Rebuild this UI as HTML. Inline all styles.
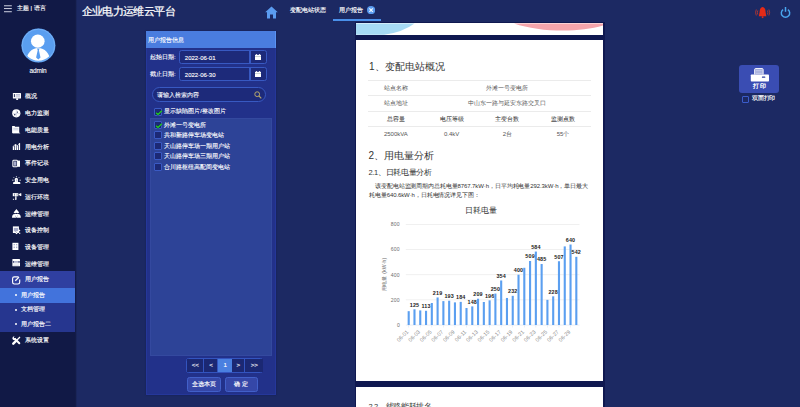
<!DOCTYPE html>
<html><head><meta charset="utf-8">
<style>
*{margin:0;padding:0;box-sizing:border-box}
html,body{width:800px;height:407px;overflow:hidden;background:#1c2963;font-family:"Liberation Sans",sans-serif;color:#fff}
.a{position:absolute;white-space:nowrap}
#side{position:absolute;left:0;top:0;width:75px;height:407px;background:#111946}
.mi{position:absolute;left:0;width:75px;height:17px;font-size:6px;line-height:17px}
.mi span{position:absolute;left:25px;top:0;-webkit-text-stroke:.15px #fff}
.mi svg{position:absolute;left:12px;top:4px;width:9px;height:9px}
.sub{position:absolute;left:0;width:75px;height:15px;font-size:6px;line-height:15px}
.sub span{position:absolute;left:20.5px;top:0;-webkit-text-stroke:.15px #fff}
.sub i{position:absolute;left:14.9px;top:6.3px;width:2.2px;height:2.2px;background:#fff;border-radius:50%}
#panelbg{position:absolute;left:145.8px;top:30.9px;width:130.2px;height:364.2px;background:#22318a;border:1px solid #25379a;box-shadow:0 0 1.5px #141d52}
#panel{position:absolute;left:146px;top:31px;width:129px;height:364px}
.inp{position:absolute;background:#1d2a7a;border:1px solid #3859c2;border-radius:2.5px}
.cb{position:absolute;width:8.3px;height:8px;background:#1c2975;border:1px solid #3a5ac4;border-radius:1px}
.lt{position:absolute;font-size:6px;line-height:8px;white-space:nowrap;-webkit-text-stroke:.12px #fff}
.doc{position:absolute;left:355px;width:248.7px;background:#fff;border:1px solid #0f1850;color:#333}
.tr{position:absolute;left:12px;width:223px;border-top:1px solid #ebebeb;height:15.5px;font-size:6px;line-height:15px;color:#555}
.tr div{position:absolute;top:0;text-align:center;width:55.75px}
.pg{position:absolute;top:0;height:100%;background:#1b2873;border:1px solid #3354bf;font-size:6.2px;line-height:12.5px;text-align:center;-webkit-text-stroke:.1px #fff}
.btn{position:absolute;height:14.5px;background:#3547a8;border:1px solid #4260c9;border-radius:2.5px;font-size:6px;line-height:12.5px;text-align:center;-webkit-text-stroke:.15px #fff}
</style></head><body>
<div id="side">
  <svg class="a" style="left:3.8px;top:4.5px" width="8" height="8" viewBox="0 0 8 8"><rect x="0" y=".35" width="7.8" height=".9" fill="#e4e6f2"/><rect x="0" y="3.15" width="7.8" height=".9" fill="#e4e6f2"/><rect x="0" y="6.3" width="7.8" height=".9" fill="#e4e6f2"/></svg>
  <div class="a" style="left:16.8px;top:5px;font-size:6px;line-height:7px;-webkit-text-stroke:.15px #fff">主题 | 语言</div>
  <svg class="a" style="left:20.5px;top:28px" width="35" height="35" viewBox="0 0 35 35">
    <circle cx="17.4" cy="17.45" r="17" fill="#5a9ef0"/>
    <circle cx="17.4" cy="17.45" r="16.3" fill="none" stroke="#7ab4f6" stroke-width=".8"/>
    <clipPath id="cc"><circle cx="17.4" cy="17.45" r="15.2"/></clipPath>
    <g clip-path="url(#cc)">
    <ellipse cx="16.8" cy="13.2" rx="6.8" ry="6.6" fill="#fff"/>
    <ellipse cx="17.2" cy="32.5" rx="11.8" ry="12.5" fill="#fff"/>
    <path d="M16 20.6 L18.6 20.6 L17.9 22.3 L19.5 29.5 L17.3 31.5 L15.1 29.5 L16.7 22.3Z" fill="#5a9ef0"/>
    </g>
  </svg>
  <div class="a" style="left:29.4px;top:67.2px;font-size:6.5px;line-height:7px;letter-spacing:-.12px;-webkit-text-stroke:.1px #fff">admin</div>

  <svg class="a" style="left:10px;top:90px" width="14" height="14" viewBox="0 0 14 14"><rect x="2.9" y="3.1" width="8.1" height="5.3" rx=".5" fill="#fff"/><rect x="3.9" y="4.1" width=".9" height="3" fill="#111946"/><rect x="5.8" y="4.2" width="4.2" height="3.1" fill="#a9adcb"/><rect x="5.8" y="5.1" width="4.2" height=".5" fill="#fff"/><rect x="5.8" y="6.2" width="4.2" height=".5" fill="#fff"/><rect x="6.2" y="8.3" width="1.9" height="1.7" fill="#fff"/></svg>
  <div class="mi" style="top:88.2px"><span>概况</span></div>
  <svg class="a" style="left:10px;top:106px" width="14" height="14" viewBox="0 0 14 14"><circle cx="6.3" cy="7.3" r="4.1" fill="#fff"/><circle cx="7.4" cy="6.1" r=".65" fill="#111946"/><path d="M4 8.3 Q4.8 7.6 5.6 8.4 Q5.2 9.6 4.6 9.4Z" fill="#111946"/><path d="M6.3 3.6 V11 M2.6 7.6 H10" stroke="#a9adcb" stroke-width=".4"/></svg>
  <div class="mi" style="top:105px"><span>电力监测</span></div>
  <svg class="a" style="left:10px;top:123px" width="14" height="14" viewBox="0 0 14 14"><path d="M2.1 3.1 H4.6 L5.1 3.7 H9.2 V10 H2.1Z" fill="#fff"/><rect x="3.3" y="4.9" width="5.2" height=".6" fill="#a9adcb"/><rect x="3.3" y="6.6" width="5.2" height=".6" fill="#a9adcb"/><path d="M9.2 9.5 L9.8 10.3 H2.8 V10" stroke="#fff" stroke-width=".5" fill="none"/></svg>
  <div class="mi" style="top:121.7px"><span>电能质量</span></div>
  <svg class="a" style="left:10px;top:140px" width="14" height="14" viewBox="0 0 14 14"><rect x="2.8" y="6.3" width="1.4" height="3.7" fill="#fff"/><rect x="4.8" y="4.3" width="1.4" height="5.7" fill="#fff"/><rect x="6.7" y="5.5" width="1.5" height="4.5" fill="#fff"/><rect x="8.9" y="3.1" width="1.2" height="6.9" fill="#fff"/><path d="M2.8 6.5 L5.5 4.5 L7.4 5.8 L9.5 3.3" stroke="#fff" stroke-width=".6" fill="none"/><rect x="4.8" y="6.8" width="3.4" height=".4" fill="#a9adcb"/></svg>
  <div class="mi" style="top:138.5px"><span>用电分析</span></div>
  <svg class="a" style="left:10px;top:157px" width="14" height="14" viewBox="0 0 14 14"><rect x="2.9" y="3.2" width="4.5" height="6.6" rx=".8" fill="none" stroke="#fff" stroke-width="1.1"/><rect x="4" y="4.4" width="2.3" height="4.3" fill="#a9adcb"/><rect x="7.6" y="3.6" width="2.4" height="6.2" fill="#fff"/></svg>
  <div class="mi" style="top:155.2px"><span>事件记录</span></div>
  <svg class="a" style="left:10px;top:173px" width="14" height="14" viewBox="0 0 14 14"><path d="M4.8 8.9 V6.3 Q4.8 4.7 6.35 4.7 Q7.9 4.7 7.9 6.3 V8.9Z" fill="#fff"/><rect x="6" y="6.3" width=".7" height="2" fill="#a9adcb"/><path d="M3.1 11 V9.8 Q3.1 8.9 4 8.9 H9.4 Q10.3 8.9 10.3 9.8 V11Z" fill="#fff"/><path d="M6.4 3.1 V4.2 M3.5 4.2 L4.4 5.1 M9.3 4.2 L8.4 5.1 M2 7.2 H3.6 M9.3 7.2 H11" stroke="#fff" stroke-width=".7"/></svg>
  <div class="mi" style="top:172px"><span>安全用电</span></div>
  <svg class="a" style="left:10px;top:190px" width="14" height="14" viewBox="0 0 14 14"><rect x="2.8" y="3.1" width="5.5" height="3.1" fill="#fff"/><rect x="4.1" y="3.7" width=".5" height="2" fill="#111946"/><rect x="6.8" y="3.7" width=".5" height="2" fill="#111946"/><path d="M8.3 4.6 L10.3 3.3 L11.3 3.3 V6 L10.3 6 Z" fill="#fff"/><rect x="5.2" y="6.2" width="1.3" height="2.8" fill="#fff"/><rect x="2.9" y="8.8" width="1.2" height="1" fill="#fff"/><rect x="5" y="8.8" width="1.5" height="1" fill="#fff"/></svg>
  <div class="mi" style="top:188.7px"><span>运行环境</span></div>
  <svg class="a" style="left:10px;top:207px" width="14" height="14" viewBox="0 0 14 14"><path d="M6.4 2 L9.2 5.4 Q8.2 6.3 6.4 6.3 Q4.6 6.3 3.6 5.4Z" fill="#fff"/><circle cx="6.4" cy="6.4" r=".6" fill="#111946"/><path d="M2 10.7 Q2 7.2 4.6 7 L6.2 10.7Z M10.8 10.7 Q10.8 7.2 8.2 7 L6.6 10.7Z" fill="#fff"/><path d="M4.2 6.9 L6.4 10.7 L8.6 6.9Z" fill="#fff"/></svg>
  <div class="mi" style="top:205.5px"><span>运维管理</span></div>
  <svg class="a" style="left:10px;top:223px" width="14" height="14" viewBox="0 0 14 14"><rect x="2.9" y="3.4" width="6" height="6.6" fill="#fff"/><rect x="3.8" y="4.9" width="4.2" height="3.4" fill="#a9adcb"/><path d="M5.8 9.9 L6.5 10.4 L10 6.8" stroke="#fff" stroke-width="1.2" fill="none"/><path d="M5.6 8.6 L6.6 9.6" stroke="#111946" stroke-width=".5"/><circle cx="9.7" cy="10.3" r=".7" fill="#fff"/></svg>
  <div class="mi" style="top:222.2px"><span>设备控制</span></div>
  <svg class="a" style="left:10px;top:240px" width="14" height="14" viewBox="0 0 14 14"><rect x="2.4" y="2.8" width="6" height="7.2" fill="#fff"/><rect x="3.6" y="4" width="1.3" height="1.3" fill="#a9adcb"/><rect x="6" y="4" width="1.3" height="1.3" fill="#a9adcb"/><rect x="3.6" y="6.6" width="1.3" height="1.5" fill="#a9adcb"/><rect x="6" y="6.6" width="1.3" height="1.5" fill="#a9adcb"/></svg>
  <div class="mi" style="top:239px"><span>设备管理</span></div>
  <svg class="a" style="left:10px;top:257px" width="14" height="14" viewBox="0 0 14 14"><rect x="2.4" y="2" width="7.6" height="7.3" rx=".6" fill="#fff"/><rect x="2.4" y="4.1" width="7.6" height="1.6" fill="#a9adcb"/><rect x="2.9" y="4.1" width=".8" height="1.6" fill="#111946"/><rect x="8.6" y="4.1" width=".8" height="1.6" fill="#111946"/><rect x="3.3" y="6.8" width="5.8" height=".4" fill="#a9adcb"/><rect x="3.3" y="8" width="5.8" height=".4" fill="#a9adcb"/></svg>
  <div class="mi" style="top:255.7px"><span>运维管理</span></div>
  <div style="position:absolute;left:0;top:271.2px;width:75.2px;height:16.4px;background:#2f3fa0"></div>
  <svg class="a" style="left:10px;top:273px" width="14" height="14" viewBox="0 0 14 14"><path d="M8.6 3.9 H4.3 Q2.6 3.9 2.6 5.6 V9.3 Q2.6 11 4.3 11 H8 Q9.7 11 9.7 9.3 V6.5" fill="none" stroke="#fff" stroke-width="1.15"/><path d="M5.3 7.8 L9 4.1" stroke="#fff" stroke-width="1.3"/></svg>
  <div class="mi" style="top:271.2px"><span>用户报告</span></div>
  <div style="position:absolute;left:0;top:287.5px;width:75.2px;height:44.4px;background:#26368f"></div>
  <div style="position:absolute;left:0;top:287.5px;width:75.2px;height:15px;background:#4273dc"></div>
  <div class="sub" style="top:287.5px"><i></i><span>用户报告</span></div>
  <div class="sub" style="top:302.3px"><i></i><span>文档管理</span></div>
  <div class="sub" style="top:317px"><i></i><span>用户报告二</span></div>
  <div class="mi" style="top:331.6px"><svg viewBox="0 0 9 9" style="left:11.8px;top:4.6px"><path d="M3 3 L7.3 7.3" stroke="#fff" stroke-width="2" stroke-linecap="round"/><path d="M.3 2.2 Q.5 .2 2.6 .2 L1.8 1.5 L2.5 2.5 L3.8 1.8 Q4.2 4 2.3 4.2 Q.6 4.2 .3 2.2Z" fill="#fff"/><path d="M8 1 L4 5" stroke="#fff" stroke-width="1.3"/><path d="M3.8 5.2 L1.3 7.7" stroke="#fff" stroke-width="2.4" stroke-linecap="round"/></svg><span>系统设置</span></div>
</div>
<div style="position:absolute;left:75px;top:0;width:1.6px;height:407px;background:linear-gradient(90deg,#10173f,#1c2963)"></div>

<!-- header -->
<div class="a" style="left:81.6px;top:4.6px;font-size:11px;line-height:13px;letter-spacing:-.62px;-webkit-text-stroke:.25px #fff">企业电力运维云平台</div>
<svg class="a" style="left:265px;top:6px" width="13" height="13" viewBox="0 0 13 13"><path d="M6.5 .5 L12.8 6.3 L11 6.3 L11 12.5 L8 12.5 L8 8.5 L5 8.5 L5 12.5 L2 12.5 L2 6.3 L.2 6.3Z" fill="#5b9cf0"/></svg>
<div class="a" style="left:289.9px;top:6.9px;font-size:5.9px;line-height:7px;-webkit-text-stroke:.15px #fff">变配电站状态</div>
<div class="a" style="left:339.2px;top:6.9px;font-size:5.9px;line-height:7px;-webkit-text-stroke:.15px #fff">用户报告</div>
<svg class="a" style="left:366.8px;top:6.2px" width="8.2" height="8.2" viewBox="0 0 8 8"><circle cx="4" cy="4" r="4" fill="#5b9cf0"/><path d="M2.3 2.3 L5.7 5.7 M5.7 2.3 L2.3 5.7" stroke="#eef6ff" stroke-width="1.25"/></svg>
<div style="position:absolute;left:333px;top:19.2px;width:48px;height:1.6px;background:#4a90ea"></div>

<!-- top right -->
<svg class="a" style="left:753px;top:6px" width="19" height="13" viewBox="0 0 19 13"><path d="M9.6 1 Q12.5 1.5 12.5 5.5 L13.3 10.3 L5.8 10.3 L6.7 5.5 Q6.7 1.5 9.6 1Z" fill="#e52a17"/><rect x="8.8" y="10.3" width="1.6" height="1.8" fill="#e52a17"/><path d="M3.3 3.5 Q1.8 6.5 3.3 9.5 M15.9 3.5 Q17.4 6.5 15.9 9.5" stroke="#c8372a" stroke-width=".8" fill="none"/><path d="M4.8 4.5 Q3.8 6.5 4.8 8.5 M14.4 4.5 Q15.4 6.5 14.4 8.5" stroke="#c8372a" stroke-width=".8" fill="none"/></svg>
<svg class="a" style="left:780px;top:6px" width="11" height="12" viewBox="0 0 11 12"><path d="M3.1 3.6 A4.2 4.2 0 1 0 7.9 3.6" stroke="#49a6ef" stroke-width="1.45" fill="none"/><path d="M5.5 1 V5.8" stroke="#49a6ef" stroke-width="1.5"/></svg>

<!-- panel -->
<div id="panelbg"></div>
<div id="panel">
  <div style="position:absolute;left:0;top:.2px;width:129.6px;height:16.9px;background:#4a7ddf;border-right:.8px solid #5a92f2"></div>
  <div class="lt" style="left:2px;top:5px;font-size:6px">用户报告信息</div>
  <div class="lt" style="left:4px;top:22px">起始日期:</div>
  <div class="inp" style="left:33px;top:19px;width:88px;height:14.3px;border-radius:2.5px"></div>
  <div style="position:absolute;left:103.1px;top:19px;width:1.8px;height:14.3px;background:#3859c2"></div>
  <div class="lt" style="left:38.8px;top:22.5px">2022-06-01</div>
  <div class="lt" style="left:4px;top:39.3px">截止日期:</div>
  <div class="inp" style="left:33px;top:35.9px;width:88px;height:14.3px"></div>
  <div style="position:absolute;left:103.1px;top:35.9px;width:1.8px;height:14.3px;background:#3859c2"></div>
  <div class="lt" style="left:38.8px;top:39.5px">2022-06-30</div>
  <svg class="a" style="left:109px;top:23px" width="6" height="6" viewBox="0 0 6 6"><rect x="0" y=".8" width="6" height="5.2" fill="#fff"/><rect x="0" y="2" width="6" height=".5" fill="#9aa"/><rect x="1.2" y="0" width=".8" height="1.3" fill="#fff"/><rect x="4" y="0" width=".8" height="1.3" fill="#fff"/></svg>
  <svg class="a" style="left:109px;top:40px" width="6" height="6" viewBox="0 0 6 6"><rect x="0" y=".8" width="6" height="5.2" fill="#fff"/><rect x="0" y="2" width="6" height=".5" fill="#9aa"/><rect x="1.2" y="0" width=".8" height="1.3" fill="#fff"/><rect x="4" y="0" width=".8" height="1.3" fill="#fff"/></svg>
  <div class="inp" style="left:6.4px;top:56px;width:114px;height:15.3px;border-radius:7.6px"></div>
  <div class="lt" style="left:11px;top:60.4px;color:#e6e9f8">请输入检索内容</div>
  <svg class="a" style="left:108px;top:60.3px" width="8" height="8" viewBox="0 0 8 8"><circle cx="3.2" cy="3.2" r="2.4" stroke="#b5a66c" stroke-width="1" fill="none"/><path d="M5 5 L7.3 7.3" stroke="#b5a66c" stroke-width="1.1"/></svg>
  <div class="cb" style="left:8.15px;top:76.8px"></div>
  <svg class="a" style="left:9px;top:78px" width="8" height="7" viewBox="0 0 8 7"><path d="M1.1 3.7 L3 5.6 L6.8 1.8" stroke="#0a1550" stroke-width="2.2" fill="none" opacity=".5"/><path d="M1.1 3.7 L3 5.6 L6.8 1.8" stroke="#22c922" stroke-width="1.4" fill="none"/></svg>
  <div class="lt" style="left:18.2px;top:76.4px">显示缺陷图片/整改图片</div>
  <div style="position:absolute;left:4.1px;top:86.7px;width:121.6px;height:238.4px;background:#2d4397;border:.6px solid #34499f"></div>
  <div class="cb" style="left:8.15px;top:89.9px"></div>
  <svg class="a" style="left:9px;top:91.1px" width="8" height="7" viewBox="0 0 8 7"><path d="M1.1 3.7 L3 5.6 L6.8 1.8" stroke="#0a1550" stroke-width="2.2" fill="none" opacity=".5"/><path d="M1.1 3.7 L3 5.6 L6.8 1.8" stroke="#22c922" stroke-width="1.4" fill="none"/></svg>
  <div class="lt" style="left:18.2px;top:90px">外滩一号变电所</div>
  <div class="cb" style="left:8.15px;top:100.3px"></div>
  <div class="lt" style="left:18.2px;top:100.4px">共和新路停车场变电站</div>
  <div class="cb" style="left:8.15px;top:110.7px"></div>
  <div class="lt" style="left:18.2px;top:110.8px">天山路停车场一期用户站</div>
  <div class="cb" style="left:8.15px;top:121.1px"></div>
  <div class="lt" style="left:18.2px;top:121.2px">天山路停车场三期用户站</div>
  <div class="cb" style="left:8.15px;top:131.5px"></div>
  <div class="lt" style="left:18.2px;top:131.6px">合川路枢纽高配间变电站</div>

  <div style="position:absolute;left:40.3px;top:327.4px;width:77.2px;height:14.8px;border:1px solid #3354bf;border-radius:2.5px;background:#1b2873">
    <div class="pg" style="left:0;width:17px;border-width:0 1px 0 0">&lt;&lt;</div>
    <div class="pg" style="left:17.5px;width:13.5px;border-width:0 1px 0 0">&lt;</div>
    <div class="pg" style="left:31px;width:14px;background:#4a80e0;border-width:0">1</div>
    <div class="pg" style="left:45px;width:13px;border-width:0 1px 0 0">&gt;</div>
    <div class="pg" style="left:58.5px;width:17px;border-width:0">&gt;&gt;</div>
  </div>
  <div class="btn" style="left:40.7px;top:346.3px;width:34px">全选本页</div>
  <div class="btn" style="left:78.5px;top:346.3px;width:33.5px">确 定</div>
</div>

<!-- doc -->
<div style="position:absolute;left:354.6px;top:22.4px;width:250.2px;height:385px;background:#0f1850"></div>
<div class="doc" style="top:22.3px;height:13.7px;overflow:hidden;border-width:1px">
  <svg class="a" style="left:0;top:0" width="247" height="12" viewBox="0 0 247 12"><path d="M0 .4 H58.5 Q47 9 28 11.8 L0 11.8Z" fill="#a6daf4"/><path d="M158 .4 C183 9 222 10 247 2.6 V.4Z" fill="#f5a5ac"/></svg>
</div>
<div class="doc" style="top:38.5px;height:343.3px">
  <div class="a" style="left:13px;top:21px;font-size:10px;line-height:12px;color:#333">1、变配电站概况</div>
  <div class="tr" style="top:40.3px"><div style="left:0">站点名称</div><div style="left:55.75px;width:167.25px">外滩一号变电所</div></div>
  <div class="tr" style="top:55.8px"><div style="left:0">站点地址</div><div style="left:55.75px;width:167.25px">中山东一路与延安东路交叉口</div></div>
  <div class="tr" style="top:71.3px;color:#404040;-webkit-text-stroke:.05px #404040"><div style="left:0">总容量</div><div style="left:55.75px">电压等级</div><div style="left:111.5px">主变台数</div><div style="left:167.25px">监测点数</div></div>
  <div class="tr" style="top:86.9px"><div style="left:0">2500kVA</div><div style="left:55.75px">0.4kV</div><div style="left:111.5px">2台</div><div style="left:167.25px">55个</div></div>
  <div class="a" style="left:12.5px;top:110px;font-size:10px;line-height:12px;color:#333">2、用电量分析</div>
  <div class="a" style="left:12.5px;top:128.5px;font-size:7.5px;line-height:9px;letter-spacing:-.32px;color:#333">2.1、日耗电量分析</div>
  <div class="a" style="left:13px;top:142px;width:221px;font-size:6px;line-height:9px;color:#333;white-space:normal;text-indent:6px;letter-spacing:-.1px">该变配电站监测周期内总耗电量8767.7kW·h，日平均耗电量292.3kW·h，单日最大耗电量640.6kW·h，日耗电情况详见下图：</div>
  <div class="a" style="left:108.5px;top:166px;font-size:8px;line-height:9px;color:#333">日耗电量</div>
  <div id="chart"></div>
</div>
<div class="doc" style="top:385.5px;height:30px">
  <div class="a" style="left:12.5px;top:15px;font-size:7.5px;line-height:9px;letter-spacing:-.32px;color:#333">2.2、线路能耗排名</div>
</div>

<!--CHART--><svg class="a" style="left:356px;top:195px" width="247" height="155" viewBox="356 195 247 155">
<rect x="405.8" y="299.45" width="173.7" height="0.8" fill="#ededed"/>
<text x="399.8" y="301.65" font-size="5.1" fill="#6e6e6e" text-anchor="end" letter-spacing=".15">200</text>
<rect x="405.8" y="274.30" width="173.7" height="0.8" fill="#ededed"/>
<text x="399.8" y="276.50" font-size="5.1" fill="#6e6e6e" text-anchor="end" letter-spacing=".15">400</text>
<rect x="405.8" y="249.15" width="173.7" height="0.8" fill="#ededed"/>
<text x="399.8" y="251.35" font-size="5.1" fill="#6e6e6e" text-anchor="end" letter-spacing=".15">600</text>
<rect x="405.8" y="224.00" width="173.7" height="0.8" fill="#ededed"/>
<text x="399.8" y="226.20" font-size="5.1" fill="#6e6e6e" text-anchor="end" letter-spacing=".15">800</text>
<text x="399.8" y="326.80" font-size="5.1" fill="#6e6e6e" text-anchor="end">0</text>
<rect x="405.8" y="324.70" width="173.7" height="0.7" fill="#e0e6f1"/>
<rect x="407.65" y="311.17" width="2.1" height="13.83" fill="#5b9ff0"/>
<rect x="408.40" y="325.00" width="0.6" height="2.5" fill="#e0e6f1"/>
<text transform="translate(409.00,332.20) rotate(-45)" font-size="5.4" fill="#888" text-anchor="end" letter-spacing=".1">06-01</text>
<rect x="413.43" y="309.28" width="2.1" height="15.72" fill="#5b9ff0"/>
<text x="414.48" y="306.58" font-size="5.4" font-weight="bold" fill="#222" letter-spacing=".15" text-anchor="middle">125</text>
<rect x="419.21" y="310.41" width="2.1" height="14.59" fill="#5b9ff0"/>
<rect x="419.96" y="325.00" width="0.6" height="2.5" fill="#e0e6f1"/>
<text transform="translate(420.56,332.20) rotate(-45)" font-size="5.4" fill="#888" text-anchor="end" letter-spacing=".1">06-03</text>
<rect x="424.99" y="310.79" width="2.1" height="14.21" fill="#5b9ff0"/>
<text x="426.04" y="308.09" font-size="5.4" font-weight="bold" fill="#222" letter-spacing=".15" text-anchor="middle">113</text>
<rect x="430.77" y="302.99" width="2.1" height="22.01" fill="#5b9ff0"/>
<rect x="431.52" y="325.00" width="0.6" height="2.5" fill="#e0e6f1"/>
<text transform="translate(432.12,332.20) rotate(-45)" font-size="5.4" fill="#888" text-anchor="end" letter-spacing=".1">06-05</text>
<rect x="436.55" y="297.46" width="2.1" height="27.54" fill="#5b9ff0"/>
<text x="437.60" y="294.76" font-size="5.4" font-weight="bold" fill="#222" letter-spacing=".15" text-anchor="middle">219</text>
<rect x="442.33" y="301.11" width="2.1" height="23.89" fill="#5b9ff0"/>
<rect x="443.08" y="325.00" width="0.6" height="2.5" fill="#e0e6f1"/>
<text transform="translate(443.68,332.20) rotate(-45)" font-size="5.4" fill="#888" text-anchor="end" letter-spacing=".1">06-07</text>
<rect x="448.11" y="300.73" width="2.1" height="24.27" fill="#5b9ff0"/>
<text x="449.16" y="298.03" font-size="5.4" font-weight="bold" fill="#222" letter-spacing=".15" text-anchor="middle">193</text>
<rect x="453.89" y="302.37" width="2.1" height="22.64" fill="#5b9ff0"/>
<rect x="454.64" y="325.00" width="0.6" height="2.5" fill="#e0e6f1"/>
<text transform="translate(455.24,332.20) rotate(-45)" font-size="5.4" fill="#888" text-anchor="end" letter-spacing=".1">06-09</text>
<rect x="459.67" y="301.86" width="2.1" height="23.14" fill="#5b9ff0"/>
<text x="460.72" y="299.16" font-size="5.4" font-weight="bold" fill="#222" letter-spacing=".15" text-anchor="middle">184</text>
<rect x="465.45" y="308.02" width="2.1" height="16.98" fill="#5b9ff0"/>
<rect x="466.20" y="325.00" width="0.6" height="2.5" fill="#e0e6f1"/>
<text transform="translate(466.80,332.20) rotate(-45)" font-size="5.4" fill="#888" text-anchor="end" letter-spacing=".1">06-11</text>
<rect x="471.23" y="306.39" width="2.1" height="18.61" fill="#5b9ff0"/>
<text x="472.28" y="303.69" font-size="5.4" font-weight="bold" fill="#222" letter-spacing=".15" text-anchor="middle">148</text>
<rect x="477.01" y="298.72" width="2.1" height="26.28" fill="#5b9ff0"/>
<text x="478.06" y="296.02" font-size="5.4" font-weight="bold" fill="#222" letter-spacing=".15" text-anchor="middle">209</text>
<rect x="477.76" y="325.00" width="0.6" height="2.5" fill="#e0e6f1"/>
<text transform="translate(478.36,332.20) rotate(-45)" font-size="5.4" fill="#888" text-anchor="end" letter-spacing=".1">06-13</text>
<rect x="482.79" y="301.99" width="2.1" height="23.01" fill="#5b9ff0"/>
<rect x="488.57" y="300.35" width="2.1" height="24.65" fill="#5b9ff0"/>
<text x="489.62" y="297.65" font-size="5.4" font-weight="bold" fill="#222" letter-spacing=".15" text-anchor="middle">196</text>
<rect x="489.32" y="325.00" width="0.6" height="2.5" fill="#e0e6f1"/>
<text transform="translate(489.92,332.20) rotate(-45)" font-size="5.4" fill="#888" text-anchor="end" letter-spacing=".1">06-15</text>
<rect x="494.35" y="293.56" width="2.1" height="31.44" fill="#5b9ff0"/>
<text x="495.40" y="290.86" font-size="5.4" font-weight="bold" fill="#222" letter-spacing=".15" text-anchor="middle">250</text>
<rect x="500.13" y="280.48" width="2.1" height="44.52" fill="#5b9ff0"/>
<text x="501.18" y="277.78" font-size="5.4" font-weight="bold" fill="#222" letter-spacing=".15" text-anchor="middle">354</text>
<rect x="500.88" y="325.00" width="0.6" height="2.5" fill="#e0e6f1"/>
<text transform="translate(501.48,332.20) rotate(-45)" font-size="5.4" fill="#888" text-anchor="end" letter-spacing=".1">06-17</text>
<rect x="505.91" y="297.96" width="2.1" height="27.04" fill="#5b9ff0"/>
<rect x="511.69" y="295.83" width="2.1" height="29.17" fill="#5b9ff0"/>
<text x="512.74" y="293.13" font-size="5.4" font-weight="bold" fill="#222" letter-spacing=".15" text-anchor="middle">232</text>
<rect x="512.44" y="325.00" width="0.6" height="2.5" fill="#e0e6f1"/>
<text transform="translate(513.04,332.20) rotate(-45)" font-size="5.4" fill="#888" text-anchor="end" letter-spacing=".1">06-19</text>
<rect x="517.47" y="274.70" width="2.1" height="50.30" fill="#5b9ff0"/>
<text x="518.52" y="272.00" font-size="5.4" font-weight="bold" fill="#222" letter-spacing=".15" text-anchor="middle">400</text>
<rect x="523.25" y="267.78" width="2.1" height="57.22" fill="#5b9ff0"/>
<rect x="524.00" y="325.00" width="0.6" height="2.5" fill="#e0e6f1"/>
<text transform="translate(524.60,332.20) rotate(-45)" font-size="5.4" fill="#888" text-anchor="end" letter-spacing=".1">06-21</text>
<rect x="529.03" y="260.99" width="2.1" height="64.01" fill="#5b9ff0"/>
<text x="530.08" y="258.29" font-size="5.4" font-weight="bold" fill="#222" letter-spacing=".15" text-anchor="middle">509</text>
<rect x="534.81" y="251.56" width="2.1" height="73.44" fill="#5b9ff0"/>
<text x="535.86" y="248.86" font-size="5.4" font-weight="bold" fill="#222" letter-spacing=".15" text-anchor="middle">584</text>
<rect x="535.56" y="325.00" width="0.6" height="2.5" fill="#e0e6f1"/>
<text transform="translate(536.16,332.20) rotate(-45)" font-size="5.4" fill="#888" text-anchor="end" letter-spacing=".1">06-23</text>
<rect x="540.59" y="264.01" width="2.1" height="60.99" fill="#5b9ff0"/>
<text x="541.64" y="261.31" font-size="5.4" font-weight="bold" fill="#222" letter-spacing=".15" text-anchor="middle">485</text>
<rect x="546.37" y="299.85" width="2.1" height="25.15" fill="#5b9ff0"/>
<rect x="547.12" y="325.00" width="0.6" height="2.5" fill="#e0e6f1"/>
<text transform="translate(547.72,332.20) rotate(-45)" font-size="5.4" fill="#888" text-anchor="end" letter-spacing=".1">06-25</text>
<rect x="552.15" y="296.33" width="2.1" height="28.67" fill="#5b9ff0"/>
<text x="553.20" y="293.63" font-size="5.4" font-weight="bold" fill="#222" letter-spacing=".15" text-anchor="middle">228</text>
<rect x="557.93" y="261.24" width="2.1" height="63.76" fill="#5b9ff0"/>
<text x="558.98" y="258.54" font-size="5.4" font-weight="bold" fill="#222" letter-spacing=".15" text-anchor="middle">507</text>
<rect x="558.68" y="325.00" width="0.6" height="2.5" fill="#e0e6f1"/>
<text transform="translate(559.28,332.20) rotate(-45)" font-size="5.4" fill="#888" text-anchor="end" letter-spacing=".1">06-27</text>
<rect x="563.71" y="246.41" width="2.1" height="78.59" fill="#5b9ff0"/>
<rect x="569.49" y="244.52" width="2.1" height="80.48" fill="#5b9ff0"/>
<text x="570.54" y="241.82" font-size="5.4" font-weight="bold" fill="#222" letter-spacing=".15" text-anchor="middle">640</text>
<rect x="570.24" y="325.00" width="0.6" height="2.5" fill="#e0e6f1"/>
<text transform="translate(570.84,332.20) rotate(-45)" font-size="5.4" fill="#888" text-anchor="end" letter-spacing=".1">06-29</text>
<rect x="575.27" y="256.84" width="2.1" height="68.16" fill="#5b9ff0"/>
<text x="576.32" y="254.14" font-size="5.4" font-weight="bold" fill="#222" letter-spacing=".15" text-anchor="middle">542</text>
<text transform="translate(386,274.2) rotate(-90)" font-size="5.2" fill="#6a6a6a" letter-spacing=".1" text-anchor="middle">用电量 (kW·h)</text>
</svg><!--/CHART-->
<!-- print -->
<div style="position:absolute;left:739.4px;top:64.5px;width:39.7px;height:28.8px;background:#3a4db3;border-radius:3px"></div>
<svg class="a" style="left:745px;top:62px" width="30" height="30" viewBox="0 0 30 30"><path d="M9.7 12.5 V7.4 Q9.7 6.6 10.5 6.6 H17.3 Q18.1 6.6 18.1 7.4 V12.5" fill="#9da6d8" stroke="#fff" stroke-width="1"/><path d="M11 8.5 H16.8 M11 10 H16.8 M11 11.5 H16.8" stroke="#d5daf2" stroke-width=".6"/><rect x="5.8" y="12.5" width="18.2" height="7" rx=".8" fill="#fff"/><rect x="16.9" y="14.6" width="3.4" height="1.2" rx=".5" fill="#2d3d9c"/></svg>
<div class="a" style="left:752.6px;top:82.3px;font-size:6.2px;line-height:7px;letter-spacing:.05px;-webkit-text-stroke:.25px #fff">打 印</div>
<div class="cb" style="left:741.5px;top:95.5px;width:7.7px;height:7.7px;border-color:#3b5ccb;background:#1c2963"></div>
<div class="a" style="left:751.8px;top:95px;font-size:6px;line-height:7px;letter-spacing:-.1px;-webkit-text-stroke:.15px #fff">双面打印</div>
</body></html>
